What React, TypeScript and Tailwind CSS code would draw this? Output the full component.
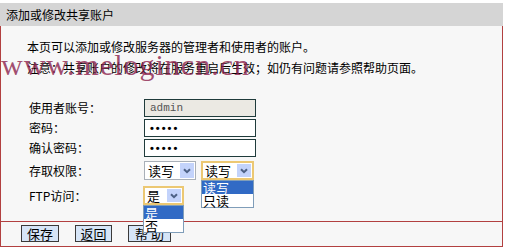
import React from "react";

function Arrow() {
  return (
    <div className="w-[16px] h-full bg-[#c3d3fb] border border-white flex items-center justify-center">
      <svg width="8" height="6" viewBox="0 0 8 6">
        <path d="M1 1.2 L4 4.2 L7 1.2" stroke="#4d6185" strokeWidth="2" fill="none" />
      </svg>
    </div>
  );
}

function DropList({ items }: { items: string[] }) {
  return (
    <div className="absolute left-0 top-full w-full bg-white border border-[#7f9db9] text-[13px] leading-[13px] z-10">
      {items.map((t, i) => (
        <div
          key={t}
          className={i === 0 ? "h-[13px] pl-px bg-[#316ac5] text-white" : "h-[13px] pl-px text-black"}
        >
          {t}
        </div>
      ))}
    </div>
  );
}

export default function App() {
  return (
    <div className="relative w-[506px] h-[250px] bg-white pt-[3px] font-['Noto_Sans_CJK_SC',sans-serif] text-black overflow-hidden">
      <div className="w-[503px] ml-0">
        <div className="h-[23px] bg-[#d5d5d5] pl-[6px] flex items-center text-[12px]">添加或修改共享账户</div>
        <div className="border-x border-[#b24040] bg-[#f7f7f7]">
          <div className="relative h-[195px] pt-[10px] text-[12px]">
            <div className="pl-[26px] leading-[21px]">
              <div>本页可以添加或修改服务器的管理者和使用者的账户。</div>
              <div>注意：共享账户的修改将在服务重启后生效；如仍有问题请参照帮助页面。</div>
            </div>
            <div className="absolute left-0 top-[24px] text-[30px] leading-[30px] tracking-[1px] font-['Liberation_Serif',serif] text-[#8b1e4b]/80 whitespace-nowrap">
              www.melogincn.cn
            </div>
            <div className="mt-[21px] pl-[28px] grid grid-cols-[115px_auto] items-center">
              <div className="h-[18px] leading-[18px] mb-[2px]">使用者账号：</div>
              <div className="mb-[2px]">
                <div className="w-[112px] h-[18px] border border-[#1f3b3b] bg-[#ebe9e3] pl-[5px] text-[11px] leading-[16px] text-[#555] font-['Liberation_Mono',monospace]">admin</div>
              </div>
              <div className="h-[18px] leading-[18px] mb-[2px]">密码：</div>
              <div className="mb-[2px]">
                <div className="w-[112px] h-[18px] border border-[#1f3b3b] bg-white pl-[5px] text-[11px] leading-[16px] tracking-[2px] font-bold font-['Liberation_Sans',sans-serif]">•••••</div>
              </div>
              <div className="h-[18px] leading-[18px] mb-[4px]">确认密码：</div>
              <div className="mb-[4px]">
                <div className="w-[112px] h-[18px] border border-[#1f3b3b] bg-white pl-[5px] text-[11px] leading-[16px] tracking-[2px] font-bold font-['Liberation_Sans',sans-serif]">•••••</div>
              </div>
              <div className="h-[19px] leading-[19px] mb-[6px]">存取权限：</div>
              <div className="flex gap-[5px] mb-[6px]">
                <div className="flex w-[52px] h-[19px] bg-white border border-[#a9b0b8]">
                  <span className="flex-1 pl-[3px] text-[13px] leading-[17px]">读写</span>
                  <Arrow />
                </div>
                <div className="relative flex w-[53px] h-[19px] bg-white border-2 border-[#ecc873]">
                  <span className="flex-1 pl-[2px] text-[13px] leading-[15px]">读写</span>
                  <Arrow />
                  <div className="absolute -left-[2px] -right-[2px] top-[17px]">
                    <DropList items={["读写", "只读"]} />
                  </div>
                </div>
              </div>
              <div className="h-[19px] leading-[19px]">FTP访问：</div>
              <div>
                <div className="relative -ml-px flex w-[41px] h-[19px] bg-white border-2 border-[#ecc873]">
                  <span className="flex-1 pl-[2px] text-[13px] leading-[15px]">是</span>
                  <Arrow />
                  <div className="absolute -left-[2px] -right-[2px] top-[17px]">
                    <DropList items={["是", "否"]} />
                  </div>
                </div>
              </div>
            </div>
          </div>
          <div className="h-[26px] border-y border-[#b24040] pt-[3px] pl-[20px] flex gap-[16px] items-start text-[13px]">
            <div className="w-[38px] h-[17px] bg-[#d6e5f7] border border-[#3a3a3a] flex items-center justify-center leading-[15px]">保存</div>
            <div className="w-[37px] h-[17px] bg-[#d6e5f7] border border-[#3a3a3a] flex items-center justify-center leading-[15px]">返回</div>
            <div className="w-[43px] h-[17px] bg-[#d6e5f7] border border-[#3a3a3a] flex items-center justify-center leading-[15px] whitespace-pre">帮 助</div>
          </div>
        </div>
      </div>
    </div>
  );
}
